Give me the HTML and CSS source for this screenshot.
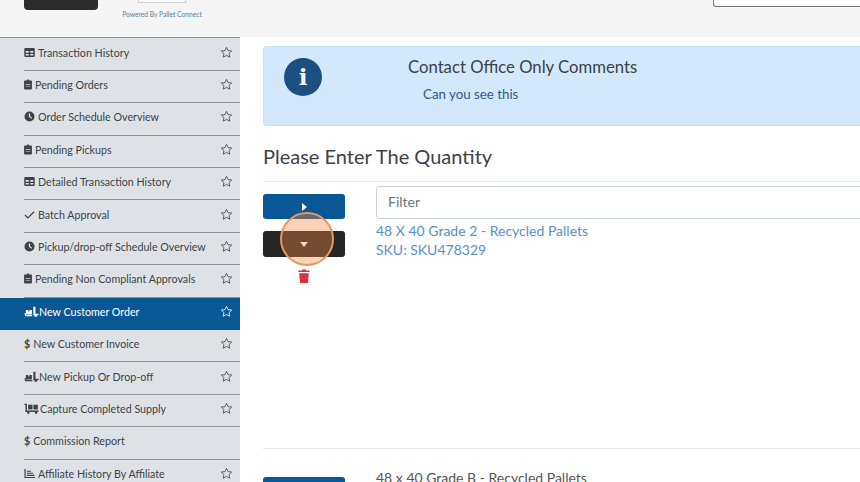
FILE: index.html
```html
<!DOCTYPE html>
<html lang="en">
<head>
<meta charset="utf-8"/>
<title>New Customer Order</title>
<link rel="stylesheet" href="styles.css">
</head>
<body>
<svg class="defs" width="0" height="0">
  <symbol id="star" viewBox="0 0 16 16"><path d="M8 1.600l1.900 4.100 4.500.5-3.300 3.100.9 4.500L8 11.600l-4 2.200.9-4.500L1.600 6.200l4.500-.5z" fill="none" stroke="currentColor" stroke-width="1"/></symbol>
  <symbol id="table" viewBox="0 0 12 12"><path fill-rule="evenodd" d="M1.200 1.200h9.600c.5 0 .9.4.9.9v7.800c0 .5-.4.9-.9.9H1.200c-.5 0-.9-.4-.9-.9V2.100c0-.5.4-.9.9-.9zM1.800 4.400v1.900h3.400V4.400zm5 0v1.900h3.400V4.400zM1.800 7.600v1.700h3.400V7.600zm5 0v1.700h3.400V7.600z"/></symbol>
  <symbol id="clip" viewBox="0 0 10 13"><path fill-rule="evenodd" d="M3.300 1.500C3.500.6 4.200.1 5 .1s1.500.5 1.700 1.400h2.200c.6 0 1 .4 1 1v9.400c0 .6-.4 1-1 1H1.100c-.6 0-1-.4-1-1V2.500c0-.6.4-1 1-1zM2.200 6v.7h5.600V6zm0 2.400v.7h5.600v-.7z"/></symbol>
  <symbol id="clock" viewBox="0 0 12 12"><path fill-rule="evenodd" d="M6 .5a5.500 5.500 0 1 1 0 11 5.500 5.500 0 0 1 0-11zM5.300 2.600v3.800l2.800 2 .8-1.100-2.200-1.600V2.600z"/></symbol>
  <symbol id="check" viewBox="0 0 12 12"><path d="M1 6.500l3.200 3.200L11 3" fill="none" stroke="currentColor" stroke-width="1.300"/></symbol>
  <symbol id="loading" viewBox="0 0 16 12"><path d="M10 .8h2.300v7.700h3.400V10H10zM1.800 4.300h2.600v1.800h1.200V4.300h2.800v4.900H1.800zM.3 7.800l1.200-.2.500 2.200h6.800v1.500H1z"/><circle cx="12.600" cy="10.300" r="1.600"/></symbol>
  <symbol id="flatbed" viewBox="0 0 16 12"><path d="M.3 .8H3v7.400h12.700v1.700H1.400V2.300H.3zM4.300 1.800h4.800v5.400H4.300zM10.100 1.800h4.800v5.400h-4.800z"/><circle cx="4.500" cy="10.700" r="1.300"/><circle cx="13" cy="10.700" r="1.300"/></symbol>
  <symbol id="chart" viewBox="0 0 12 12"><path d="M.5 1h1.300v8.700H12V11H.5zM3 3h4.500v1.200H3zM3 5.200h7v1.200H3zM3 7.400h8.500v1.200H3z"/></symbol>
</svg>

<header class="topbar">
  <div class="logo-dark"></div>
  <div class="powered">
    <div class="logo-box"></div>
    <span>Powered By Pallet Connect</span>
  </div>
  <div class="top-search"></div>
</header>

<div class="layout">
  <nav class="sidebar">
    <a class="nav-item"><span class="nav-label"><svg class="ico"><use href="#table"/></svg>Transaction History</span><svg class="star"><use href="#star"/></svg></a>
    <a class="nav-item"><span class="nav-label"><svg class="ico ico-clip"><use href="#clip"/></svg>Pending Orders</span><svg class="star"><use href="#star"/></svg></a>
    <a class="nav-item"><span class="nav-label"><svg class="ico"><use href="#clock"/></svg>Order Schedule Overview</span><svg class="star"><use href="#star"/></svg></a>
    <a class="nav-item"><span class="nav-label"><svg class="ico ico-clip"><use href="#clip"/></svg>Pending Pickups</span><svg class="star"><use href="#star"/></svg></a>
    <a class="nav-item"><span class="nav-label"><svg class="ico"><use href="#table"/></svg>Detailed Transaction History</span><svg class="star"><use href="#star"/></svg></a>
    <a class="nav-item"><span class="nav-label"><svg class="ico"><use href="#check"/></svg>Batch Approval</span><svg class="star"><use href="#star"/></svg></a>
    <a class="nav-item"><span class="nav-label"><svg class="ico"><use href="#clock"/></svg>Pickup/drop-off Schedule Overview</span><svg class="star"><use href="#star"/></svg></a>
    <a class="nav-item"><span class="nav-label"><svg class="ico ico-clip"><use href="#clip"/></svg>Pending Non Compliant Approvals</span><svg class="star"><use href="#star"/></svg></a>
    <a class="nav-item active"><span class="nav-label"><svg class="ico ico-wide"><use href="#loading"/></svg>New Customer Order</span><svg class="star"><use href="#star"/></svg></a>
    <a class="nav-item"><span class="nav-label"><span class="dollar">$</span>New Customer Invoice</span><svg class="star"><use href="#star"/></svg></a>
    <a class="nav-item"><span class="nav-label"><svg class="ico ico-wide"><use href="#loading"/></svg>New Pickup Or Drop-off</span><svg class="star"><use href="#star"/></svg></a>
    <a class="nav-item"><span class="nav-label"><svg class="ico ico-wide ico-gap"><use href="#flatbed"/></svg>Capture Completed Supply</span><svg class="star"><use href="#star"/></svg></a>
    <a class="nav-item"><span class="nav-label"><span class="dollar">$</span>Commission Report</span></a>
    <a class="nav-item"><span class="nav-label"><svg class="ico"><use href="#chart"/></svg>Affiliate History By Affiliate</span><svg class="star"><use href="#star"/></svg></a>
  </nav>

  <main class="content">
    <section class="alert">
      <div class="alert-icon"><span>i</span></div>
      <div class="alert-text">
        <h4>Contact Office Only Comments</h4>
        <p>Can you see this</p>
      </div>
    </section>

    <h2 class="page-title">Please Enter The Quantity</h2>

    <section class="order-row first">
      <div class="row-actions">
        <button class="step step-blue"><i class="tri-right"></i></button>
        <button class="step step-dark"><i class="tri-down"></i></button>
        <svg class="trash" viewBox="0 0 12 14"><path d="M4.300.6h3.400l.5 1H11.600v1.500H.4V1.600h3.400zM1.200 4.200h9.600l-.7 8.700c0 .6-.5 1-1 1H2.900c-.5 0-1-.4-1-1z"/></svg>
        <div class="click-ring"></div>
      </div>
      <div class="row-body">
        <input class="filter" type="text" placeholder="Filter"/>
        <a class="product-link">48 X 40 Grade 2 - Recycled Pallets</a>
        <a class="product-link">SKU: SKU478329</a>
      </div>
    </section>

    <section class="order-row second">
      <div class="row-actions">
        <button class="step step-blue"></button>
      </div>
      <div class="row-body">
        <span class="product-name">48 x 40 Grade B - Recycled Pallets</span>
      </div>
    </section>
  </main>
</div>
</body>
</html>
```

FILE: styles.css
```css
* {
  box-sizing: border-box;
}
html, body {
  height: 482px;
  overflow: hidden;
}
body {
  margin: 0;
  width: 860px;
  background: #fff;
  color: #3d4246;
  font-family: "Lato", "Open Sans", sans-serif;
}
.defs {
  position: absolute;
}

/* top bar, cut off by the top of the window */
.topbar {
  height: 37px;
  background: #f5f5f5;
  display: flex;
  align-items: flex-start;
  padding-left: 24px;
}
.logo-dark {
  width: 74px;
  height: 10px;
  background: #2b2b2b;
  border-radius: 0 0 4px 4px;
}
.powered {
  width: 80px;
  margin-left: 24px;
  display: flex;
  flex-direction: column;
  align-items: center;
  font-size: 6.7px;
  color: #5a7fa8;
  white-space: nowrap;
}
.logo-box {
  width: 48px;
  height: 3px;
  background: #fafafa;
  border: 1px solid #cfcfcf;
  border-top: none;
  margin-bottom: 7px;
}
.top-search {
  width: 147px;
  height: 7px;
  margin-left: auto;
  background: #fff;
  border: 1px solid #777;
  border-top: none;
  border-right: none;
  border-radius: 0 0 0 3px;
}

.layout {
  display: flex;
}

/* sidebar */
.sidebar {
  width: 240px;
  flex-shrink: 0;
  height: 445px;
  background: #dee2e6;
  border-top: 1px solid #8f9499;
  padding: 0.5px 0 0 24px;
}
.nav-item {
  height: 32.4px;
  display: flex;
  align-items: center;
  justify-content: space-between;
  padding: 0 7px 4px 0;
  border-bottom: 1px solid #8f9499;
  font-size: 10.7px;
  color: #3d4246;
  position: relative;
}
.nav-item.active {
  background: #0a5796;
  color: #fff;
  border-bottom-color: #0a5796;
}
.nav-item.active::before {
  content: "";
  position: absolute;
  left: -24px;
  top: 0;
  bottom: -1px;
  width: 24px;
  background: #0a5796;
}
.nav-label {
  display: flex;
  align-items: center;
  white-space: nowrap;
}
.ico {
  width: 11px;
  height: 11px;
  margin-right: 3px;
  fill: currentColor;
  color: inherit;
}
.ico-clip {
  width: 8px;
  margin-right: 3px;
}
.ico-wide {
  width: 15px;
  margin-right: 0;
}
.ico-gap {
  margin-right: 1px;
}
.dollar {
  margin-right: 3px;
  font-weight: 700;
}
.star {
  width: 13px;
  height: 13px;
  color: #3d4246;
}
.active .star {
  color: #fff;
}

/* main column runs past the right edge */
.content {
  width: 640px;
  padding: 9px 0 0 23px;
}
.alert {
  width: 630px;
  height: 80px;
  display: flex;
  background: #d3e8fb;
  border: 1px solid #c5dff5;
  border-right: none;
  border-radius: 4px 0 0 4px;
  padding: 11px 0 0 20px;
}
.alert-icon {
  width: 38px;
  height: 38px;
  border-radius: 50%;
  background: #1b4f82;
  color: #fff;
  font: 700 23px/38px "DejaVu Serif", serif;
  text-align: center;
  flex-shrink: 0;
}
.alert-text {
  margin-left: 86px;
}
.alert-text h4 {
  margin: -1px 0 0;
  font-size: 16.7px;
  font-weight: 400;
  line-height: 20px;
  color: #3d4246;
}
.alert-text p {
  margin: 9px 0 0 15px;
  font-size: 13.3px;
  line-height: 16px;
  color: #2f5a8a;
}
.page-title {
  margin: 17px 0 0;
  font-size: 20px;
  font-weight: 400;
  line-height: 26px;
  color: #3d4246;
}

.order-row {
  width: 620px;
  display: flex;
}
.order-row.first {
  height: 268px;
  margin-top: 12px;
  border-top: 1px solid #e6e6e6;
  border-bottom: 1px solid #e6e6e6;
  padding-top: 4px;
}
.order-row.second {
  padding-top: 20px;
}
.order-row.second .row-body {
  margin-top: -1px;
}
.row-actions {
  width: 82px;
  margin-right: 31px;
  position: relative;
  display: flex;
  flex-direction: column;
  align-items: center;
  padding-top: 8px;
}
.step {
  display: flex;
  align-items: center;
  justify-content: center;
  width: 82px;
  height: 25px;
  flex-shrink: 0;
  border: none;
  border-radius: 3px;
  padding: 0;
}
.step-blue {
  background: #0a5796;
}
.step-dark {
  background: #262626;
  margin-top: 12px;
  height: 26px;
}
.tri-right {
  border-left: 5px solid #fff;
  border-top: 4px solid transparent;
  border-bottom: 4px solid transparent;
}
.tri-down {
  border-top: 5px solid #fff;
  border-left: 4px solid transparent;
  border-right: 4px solid transparent;
}
.trash {
  width: 12px;
  height: 14px;
  margin-top: 12px;
  fill: #d9303f;
}
/* click marker over the dark button */
.click-ring {
  position: absolute;
  left: 17px;
  top: 26px;
  width: 54px;
  height: 54px;
  border-radius: 50%;
  background: rgba(247, 134, 60, 0.38);
  border: 2px solid #e39762;
}
.row-body {
  flex: 1;
  display: flex;
  flex-direction: column;
}
.filter {
  height: 33px;
  width: 100%;
  border: 1px solid #ced4da;
  border-right: none;
  border-radius: 4px 0 0 4px;
  padding: 0 11px 2px;
  font: 14px "Lato", "Open Sans", sans-serif;
  margin-bottom: 2px;
}
.filter::placeholder {
  color: #6c757d;
}
.product-link {
  font-size: 14px;
  line-height: 19px;
  color: #5b8fc9;
}
.product-name {
  font-size: 14px;
  line-height: 19px;
  color: #555;
}
```
